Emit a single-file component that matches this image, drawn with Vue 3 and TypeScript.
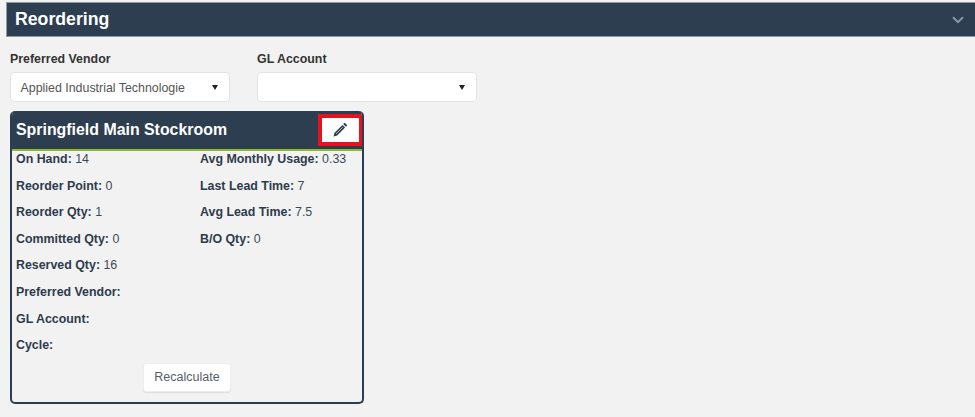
<script setup lang="ts">
const leftRows: [string, string][] = [
  ['On Hand:', '14'],
  ['Reorder Point:', '0'],
  ['Reorder Qty:', '1'],
  ['Committed Qty:', '0'],
  ['Reserved Qty:', '16'],
  ['Preferred Vendor:', ''],
  ['GL Account:', ''],
  ['Cycle:', ''],
]
const rightRows: [string, string][] = [
  ['Avg Monthly Usage:', '0.33'],
  ['Last Lead Time:', '7'],
  ['Avg Lead Time:', '7.5'],
  ['B/O Qty:', '0'],
]
</script>

<template>
  <div class="page">
    <header class="bar">
      <h1>Reordering</h1>
      <svg class="chev" width="12" height="8" viewBox="0 0 12 8"><path d="M1 1.2 6 6.2 11 1.2" fill="none" stroke="#8a97a3" stroke-width="2"/></svg>
    </header>
    <div class="filters">
      <div class="field">
        <label>Preferred Vendor</label>
        <div class="select"><span>Applied Industrial Technologie</span><i class="caret"></i></div>
      </div>
      <div class="field">
        <label>GL Account</label>
        <div class="select"><span></span><i class="caret"></i></div>
      </div>
    </div>
    <section class="card">
      <div class="card-head">
        <h2>Springfield Main Stockroom</h2>
        <button class="edit" type="button" aria-label="Edit">
          <svg width="14" height="14" viewBox="0 0 14 14"><path d="M0.6 13.4 1.4 9.9 9.4 1.9 12.1 4.6 4.1 12.6Z" fill="#2d3b4c"/><path d="M10.2 1.1 11 .3a1 1 0 0 1 1.3 0l1.4 1.4a1 1 0 0 1 0 1.3l-.8.8Z" fill="#2d3b4c"/><path d="M3 10.9 9.8 4.1" stroke="#fff" stroke-width=".7"/></svg>
        </button>
      </div>
      <div class="card-body">
        <div class="cols">
          <div class="col col-left">
            <div v-for="r in leftRows" :key="r[0]" class="row"><b>{{ r[0] }}</b> {{ r[1] }}</div>
          </div>
          <div class="col">
            <div v-for="r in rightRows" :key="r[0]" class="row"><b>{{ r[0] }}</b> {{ r[1] }}</div>
          </div>
        </div>
        <div class="actions"><button class="recalc" type="button">Recalculate</button></div>
      </div>
    </section>
  </div>
</template>

<style>
html, body { margin: 0; background: #f2f2f2; }
</style>

<style scoped>
.page {
  height: 417px;
  box-sizing: border-box;
  padding-top: 2px;
  overflow: hidden;
  background: #f2f2f2;
  font-family: "Liberation Sans", Arial, sans-serif;
  color: #2d3b4c;
}
.bar {
  height: 35px;
  margin-left: 6px;
  padding: 0 11px 0 8px;
  display: flex;
  align-items: center;
  justify-content: space-between;
  background: #2c3e50;
  border-left: 1px solid #8f99a3;
  border-top: 1px solid #8f99a3;
  border-bottom: 1px solid #8f99a3;
  box-sizing: border-box;
}
.bar h1 {
  margin: 0;
  font-size: 17.7px;
  font-weight: 700;
  color: #fff;
}
.filters {
  display: flex;
  gap: 27px;
  padding: 14px 0 0 10px;
}
.field { width: 220px; }
.field label {
  display: block;
  height: 21px;
  font-size: 12.4px;
  line-height: 17px;
  font-weight: 700;
  color: #333;
}
.select {
  height: 30px;
  box-sizing: border-box;
  padding: 1px 11.5px 0 9.5px;
  display: flex;
  align-items: center;
  justify-content: space-between;
  background: #fff;
  border: 1px solid #e3e3e3;
  border-radius: 4px;
  font-size: 12.4px;
  color: #555;
}
.caret {
  width: 0;
  height: 0;
  border-left: 3.5px solid transparent;
  border-right: 3.5px solid transparent;
  border-top: 5px solid #222;
}
.card {
  width: 354px;
  margin: 9px 0 0 10px;
  box-sizing: border-box;
  border: 2px solid #2c3e50;
  border-top: 0;
  border-radius: 5px;
  overflow: hidden;
}
.card-head {
  height: 38px;
  margin: 0 -2px;
  padding: 0 1px 0 5px;
  display: flex;
  align-items: center;
  justify-content: space-between;
  background: #2c3e50;
  border-bottom: 2px solid #8dbb2a;
}
.card-head h2 {
  margin: 0;
  padding-left: 1px;
  font-size: 15.9px;
  font-weight: 700;
  color: #fff;
}
.edit {
  width: 45px;
  height: 32px;
  box-sizing: border-box;
  display: flex;
  align-items: center;
  justify-content: center;
  padding: 0 2px 0 0;
  background: #fff;
  border: 4px solid #e3141f;
}
.card-body { padding: 0 4px 10px; }
.cols { display: flex; }
.col-left { width: 184px; }
.row {
  height: 26.6px;
  font-size: 12.4px;
  line-height: 16px;
  color: #3b4a5a;
  white-space: nowrap;
}
.row b { font-weight: 700; color: #2d3b4c; }
.actions {
  display: flex;
  justify-content: center;
  margin-top: -.8px;
}
.recalc {
  width: 88px;
  height: 29px;
  padding: 0;
  background: #fff;
  border: 1px solid #eee;
  border-radius: 3px;
  box-shadow: 0 1px 1px rgba(0,0,0,.08);
  font: 12.5px "Liberation Sans", Arial, sans-serif;
  color: #555e69;
}
</style>
